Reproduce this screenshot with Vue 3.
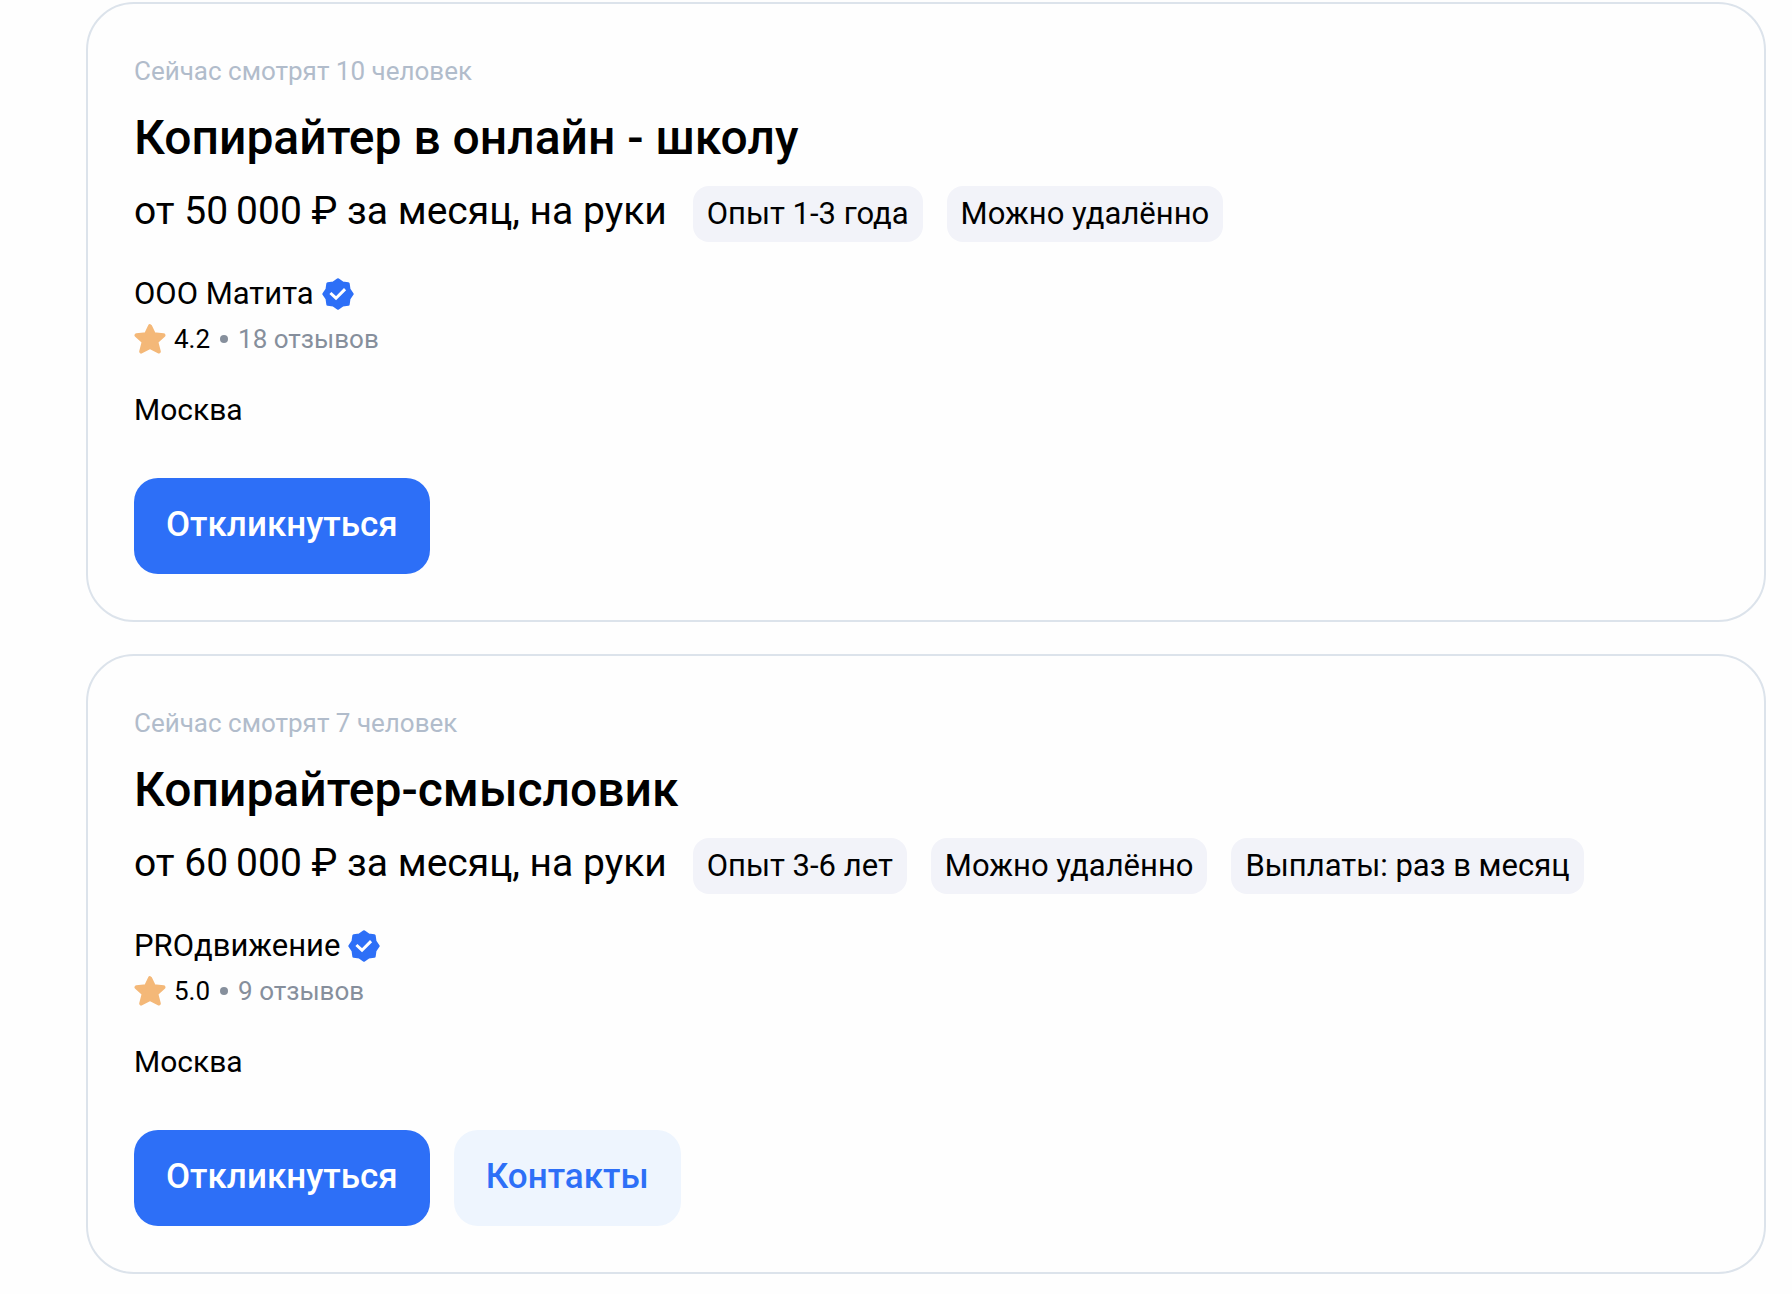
<template>
  <main class="vacancy-list">
    <article v-for="item in vacancies" :key="item.id" class="vacancy-card">
      <p class="viewers">{{ item.viewers }}</p>
      <h2 class="title">{{ item.title }}</h2>
      <div class="conditions">
        <span class="salary">{{ item.salary }}</span>
        <ul class="tags">
          <li v-for="tag in item.tags" :key="tag" class="tag">{{ tag }}</li>
        </ul>
      </div>
      <div class="company">
        <span>{{ item.company }}</span>
        <svg class="badge" viewBox="0 0 32 32" aria-hidden="true">
          <path
            d="M16 1.8 L20.6 5 L26.2 5.8 L27 11.4 L30.2 16 L27 20.6 L26.2 26.2 L20.6 27 L16 30.2 L11.4 27 L5.8 26.2 L5 20.6 L1.8 16 L5 11.4 L5.8 5.8 L11.4 5 Z"
            fill="#2d6ff7"
            stroke="#2d6ff7"
            stroke-width="3"
            stroke-linejoin="round"
          />
          <path
            d="M9.5 16 L14 20.2 L22 12.2"
            fill="none"
            stroke="#fff"
            stroke-width="3"
            stroke-linecap="square"
            stroke-linejoin="miter"
          />
        </svg>
      </div>
      <div class="rating">
        <svg class="star" viewBox="0 0 32 32" aria-hidden="true">
          <path
            d="M16 3.2 L19.8 11.2 L29.5 12.3 L22.3 18.7 L24.8 28.6 L16 24 L7.2 28.6 L9.7 18.7 L2.5 12.3 L12.2 11.2 Z"
            fill="#f4b878"
            stroke="#f4b878"
            stroke-width="4"
            stroke-linejoin="round"
          />
        </svg>
        <span>{{ item.rating }}</span>
        <span class="dot"></span>
        <span class="reviews">{{ item.reviews }}</span>
      </div>
      <p class="city">{{ item.city }}</p>
      <div class="actions">
        <button type="button" class="btn btn-primary">Откликнуться</button>
        <button v-if="item.hasContacts" type="button" class="btn btn-secondary">Контакты</button>
      </div>
    </article>
  </main>
</template>

<script setup>
import { ref } from 'vue'

defineOptions({
  name: 'VacancyList'
})

const vacancies = ref([
  {
    id: 1,
    viewers: 'Сейчас смотрят 10 человек',
    title: 'Копирайтер в онлайн - школу',
    salary: 'от 50\u2009000 ₽ за месяц, на руки',
    tags: ['Опыт 1-3 года', 'Можно удалённо'],
    company: 'ООО Матита',
    rating: '4.2',
    reviews: '18 отзывов',
    city: 'Москва',
    hasContacts: false
  },
  {
    id: 2,
    viewers: 'Сейчас смотрят 7 человек',
    title: 'Копирайтер-смысловик',
    salary: 'от 60\u2009000 ₽ за месяц, на руки',
    tags: ['Опыт 3-6 лет', 'Можно удалённо', 'Выплаты: раз в месяц'],
    company: 'PROдвижение',
    rating: '5.0',
    reviews: '9 отзывов',
    city: 'Москва',
    hasContacts: true
  }
])
</script>

<style>
body {
  background: #fefefe;
}
</style>

<style scoped>
.vacancy-list {
  display: flex;
  flex-direction: column;
  gap: 32px;
  padding: 2px 26px 20px 86px;
  font-family: Roboto, 'Liberation Sans', sans-serif;
  color: #000;
}

.vacancy-card {
  padding: 46px;
  border: 2px solid #dce3eb;
  border-radius: 48px;
}

.viewers {
  margin: 0;
  font-size: 26px;
  line-height: 42px;
  color: #b1bccb;
}

.title {
  margin: 14px 0 16px;
  font-size: 48px;
  font-weight: 500;
  line-height: 64px;
}

/* зарплата и теги */
.conditions {
  display: flex;
  flex-wrap: wrap;
  align-items: baseline;
  gap: 16px 26px;
}

.salary {
  font-size: 39px;
  line-height: 48px;
}

.tags {
  display: flex;
  flex-wrap: wrap;
  gap: 16px 24px;
  margin: 0;
  padding: 0;
  list-style: none;
}

.tag {
  padding: 0 14px;
  border-radius: 16px;
  background: #f2f3f9;
  font-size: 31px;
  line-height: 56px;
}

.company {
  display: flex;
  align-items: center;
  gap: 8px;
  margin-top: 30px;
  font-size: 31px;
  line-height: 44px;
}

.badge,
.star {
  flex: none;
  width: 32px;
  height: 32px;
}

.rating {
  display: flex;
  align-items: center;
  font-size: 26px;
  line-height: 46px;
}

.star {
  margin-right: 8px;
}

.dot {
  width: 8px;
  height: 8px;
  margin: 0 10px;
  border-radius: 50%;
  background: #868f9c;
}

.reviews {
  color: #868f9c;
}

.city {
  margin: 26px 0 0;
  font-size: 30px;
  line-height: 44px;
}

.actions {
  display: flex;
  flex-wrap: wrap;
  gap: 24px;
  margin-top: 46px;
}

.btn {
  height: 96px;
  padding: 0 32px 4px;
  border: none;
  border-radius: 24px;
  font-family: inherit;
  font-size: 35px;
  font-weight: 500;
  cursor: pointer;
}

.btn-primary {
  background: #2d6ff7;
  color: #fff;
}

.btn-secondary {
  background: #eef5fe;
  color: #2d6ff7;
}
</style>
